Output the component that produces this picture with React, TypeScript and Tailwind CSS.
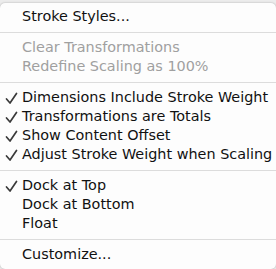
import React from "react";

const Check = () => (
  <svg width="13" height="13" viewBox="0 0 13 13" className="absolute left-[5px] top-[4px]">
    <path d="M1.5 7 L5 11 L11.5 1.5" fill="none" stroke="#3a3a3a" strokeWidth="1.7" strokeLinecap="round" strokeLinejoin="round" />
  </svg>
);

type Item = { label: string; checked?: boolean; disabled?: boolean } | "sep";

const items: Item[] = [
  { label: "Stroke Styles..." },
  "sep",
  { label: "Clear Transformations", disabled: true },
  { label: "Redefine Scaling as 100%", disabled: true },
  "sep",
  { label: "Dimensions Include Stroke Weight", checked: true },
  { label: "Transformations are Totals", checked: true },
  { label: "Show Content Offset", checked: true },
  { label: "Adjust Stroke Weight when Scaling", checked: true },
  "sep",
  { label: "Dock at Top", checked: true },
  { label: "Dock at Bottom" },
  { label: "Float" },
  "sep",
  { label: "Customize..." },
];

export default function App() {
  return (
    <div className="w-[276px] h-[269px] bg-[#ececec] overflow-hidden pt-[3px]" style={{ fontFamily: '"DejaVu Sans", "Lucida Grande", sans-serif' }}>
      <div className="w-[276px] h-[266px] bg-[#fdfdfd] rounded-[5px] pt-[4px] pb-[4px] shadow-[0_0_2px_rgba(0,0,0,0.3)]">
        {items.map((it, i) =>
          it === "sep" ? (
            <div key={i} className="h-[12px] flex items-center">
              <div className="w-full h-[1px] bg-[#dcdcdc]" />
            </div>
          ) : (
            <div
              key={i}
              className={`relative h-[19px] pl-[22px] flex items-center text-[14.4px] leading-none whitespace-nowrap ${it.disabled ? "text-[#a0a0a0]" : "text-[#111]"}`}
            >
              {it.checked && <Check />}
              {it.label}
            </div>
          )
        )}
      </div>
    </div>
  );
}
